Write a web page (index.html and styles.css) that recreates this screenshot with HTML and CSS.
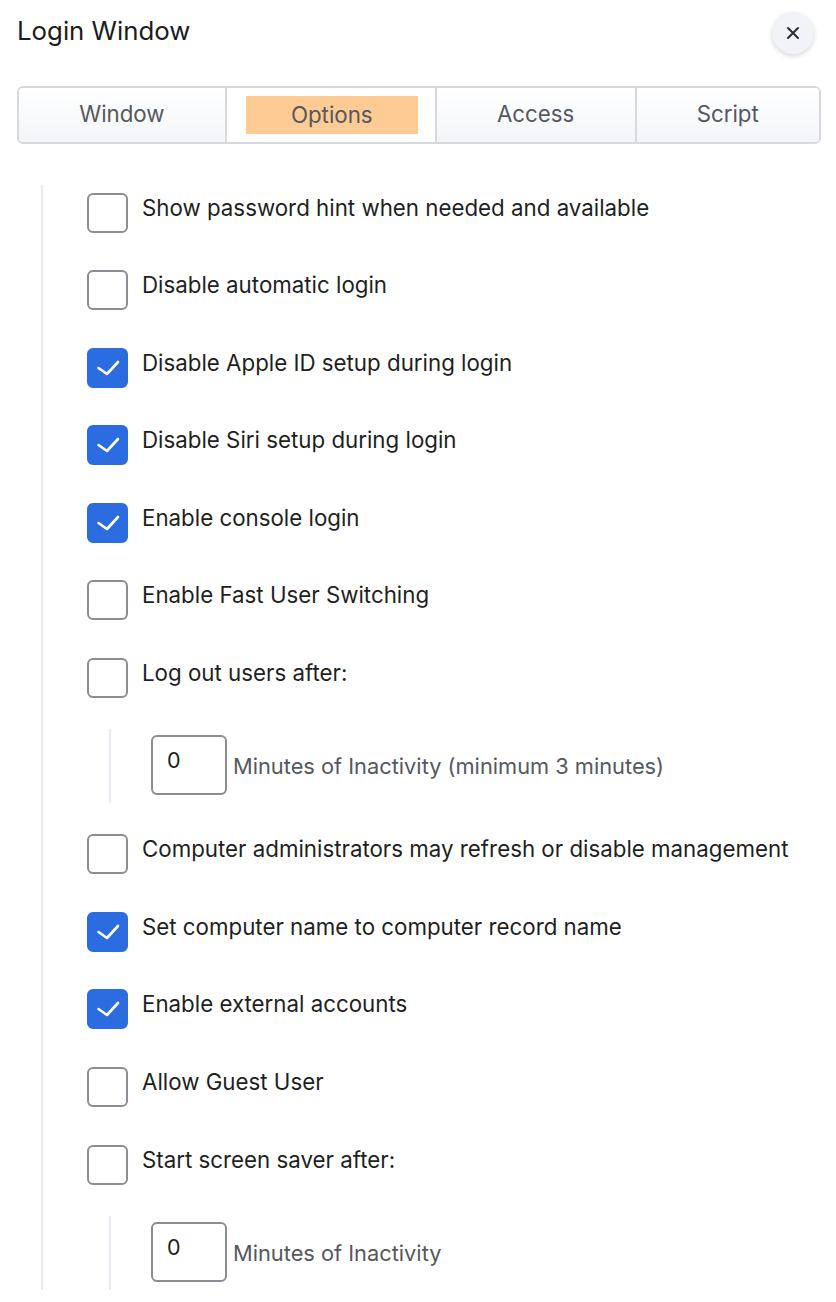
FILE: index.html
```html
<!DOCTYPE html>
<html lang="en">
<head>
<meta charset="utf-8">
<title>Login Window</title>
<link rel="stylesheet" href="styles.css">
</head>
<body>
<div class="page">
  <header class="header">
    <h1 class="title">Login Window</h1>
    <button class="close" aria-label="Close">
      <svg width="14" height="14" viewBox="0 0 14 14"><path d="M2 2 L12 12 M12 2 L2 12" stroke="#2a2c30" stroke-width="2" stroke-linecap="round"/></svg>
    </button>
  </header>

  <nav class="tabs">
    <div class="tab">Window</div>
    <div class="tab active"><span class="tab-hl">Options</span></div>
    <div class="tab">Access</div>
    <div class="tab">Script</div>
  </nav>

  <div class="options">
    <div class="row"><span class="cb"></span><span class="label">Show password hint when needed and available</span></div>
    <div class="row"><span class="cb"></span><span class="label">Disable automatic login</span></div>
    <div class="row"><span class="cb checked"><svg viewBox="0 0 40 40"><path d="M11 20 L19.5 26 L30.5 14" fill="none" stroke="#fff" stroke-width="2.6" stroke-linecap="round" stroke-linejoin="round"/></svg></span><span class="label">Disable Apple ID setup during login</span></div>
    <div class="row"><span class="cb checked"><svg viewBox="0 0 40 40"><path d="M11 20 L19.5 26 L30.5 14" fill="none" stroke="#fff" stroke-width="2.6" stroke-linecap="round" stroke-linejoin="round"/></svg></span><span class="label">Disable Siri setup during login</span></div>
    <div class="row"><span class="cb checked"><svg viewBox="0 0 40 40"><path d="M11 20 L19.5 26 L30.5 14" fill="none" stroke="#fff" stroke-width="2.6" stroke-linecap="round" stroke-linejoin="round"/></svg></span><span class="label">Enable console login</span></div>
    <div class="row"><span class="cb"></span><span class="label">Enable Fast User Switching</span></div>
    <div class="row"><span class="cb"></span><span class="label">Log out users after:</span></div>
    <div class="sub">
      <span class="num">0</span><span class="sub-label">Minutes of Inactivity (minimum 3 minutes)</span>
    </div>
    <div class="row"><span class="cb"></span><span class="label">Computer administrators may refresh or disable management</span></div>
    <div class="row"><span class="cb checked"><svg viewBox="0 0 40 40"><path d="M11 20 L19.5 26 L30.5 14" fill="none" stroke="#fff" stroke-width="2.6" stroke-linecap="round" stroke-linejoin="round"/></svg></span><span class="label">Set computer name to computer record name</span></div>
    <div class="row"><span class="cb checked"><svg viewBox="0 0 40 40"><path d="M11 20 L19.5 26 L30.5 14" fill="none" stroke="#fff" stroke-width="2.6" stroke-linecap="round" stroke-linejoin="round"/></svg></span><span class="label">Enable external accounts</span></div>
    <div class="row"><span class="cb"></span><span class="label">Allow Guest User</span></div>
    <div class="row"><span class="cb"></span><span class="label">Start screen saver after:</span></div>
    <div class="sub">
      <span class="num">0</span><span class="sub-label">Minutes of Inactivity</span>
    </div>
  </div>
</div>
</body>
</html>
```
FILE: styles.css
```css
* { box-sizing: border-box; }
html, body { margin: 0; padding: 0; background: #fff; }
body {
  font-family: "Inter", "Noto Sans", sans-serif;
  color: #1e1f23;
  width: 836px;
  height: 1302px;
  overflow: hidden;
}
.page { display: flex; flex-direction: column; }

.header {
  display: flex;
  align-items: center;
  justify-content: space-between;
  padding: 12px 22px 0 17px;
  height: 54px;
}
.title {
  margin: 0;
  font-size: 25.8px;
  font-weight: 400;
  color: #1b1c20;
  line-height: 1;
  padding-bottom: 4px;
}
.close {
  width: 42px;
  height: 42px;
  border-radius: 50%;
  border: none;
  background: #f2f3f7;
  box-shadow: 0 2px 5px rgba(0, 0, 0, 0.16);
  display: flex;
  align-items: center;
  justify-content: center;
  padding: 0;
}

.tabs {
  display: flex;
  margin: 32px 15px 0 17px;
  height: 58px;
  border: 2px solid #d7d9dd;
  border-radius: 6px;
  overflow: hidden;
}
.tab {
  flex: 1 1 auto;
  display: flex;
  align-items: center;
  justify-content: center;
  font-size: 22.3px;
  color: #55585e;
  background: linear-gradient(#ffffff, #f3f5f8);
  border-left: 2px solid #d7d9dd;
  padding-bottom: 3px;
}
.tab:first-child { border-left: none; }
.tab.active { background: #fff; padding: 0 2px 0 4px; }
.tab-hl {
  background: #fecb95;
  height: 38px;
  padding: 0 45px 2px;
  margin: 0 -45px;
  display: flex;
  align-items: center;
}

.options {
  margin: 41px 0 0 41px;
  border-left: 2px solid #e8ebef;
  padding: 7.5px 0 0 44px;
  display: flex;
  flex-direction: column;
  gap: 37.6px;
  height: 1105px;
}
.row {
  display: flex;
  align-items: flex-start;
  height: 40px;
}
.cb {
  flex: none;
  width: 41px;
  height: 40px;
  border: 2px solid #8a8e93;
  border-radius: 6px;
  background: #fff;
  display: flex;
}
.cb.checked {
  background: #2b6de0;
  border-color: #2b6de0;
}
.cb svg { margin: -2px; width: 41px; height: 40px; }
.label {
  margin-left: 14px;
  margin-top: 1px;
  font-size: 22.3px;
  color: #1e1f23;
  white-space: nowrap;
}

.sub {
  margin: -6.5px 0 -6.5px 22px;
  border-left: 2px solid #e8ebef;
  height: 74px;
  padding: 6px 0 0 40px;
  display: flex;
  align-items: flex-start;
}
.num {
  flex: none;
  width: 76px;
  height: 60px;
  border: 2px solid #8a8e93;
  border-radius: 6px;
  padding: 10px 0 0 14px;
  font-size: 21.5px;
  color: #1e1f23;
}
.sub-label {
  margin-left: 6px;
  font-size: 21.8px;
  color: #55585e;
  white-space: nowrap;
  align-self: center;
  margin-top: -6px;
}
```
